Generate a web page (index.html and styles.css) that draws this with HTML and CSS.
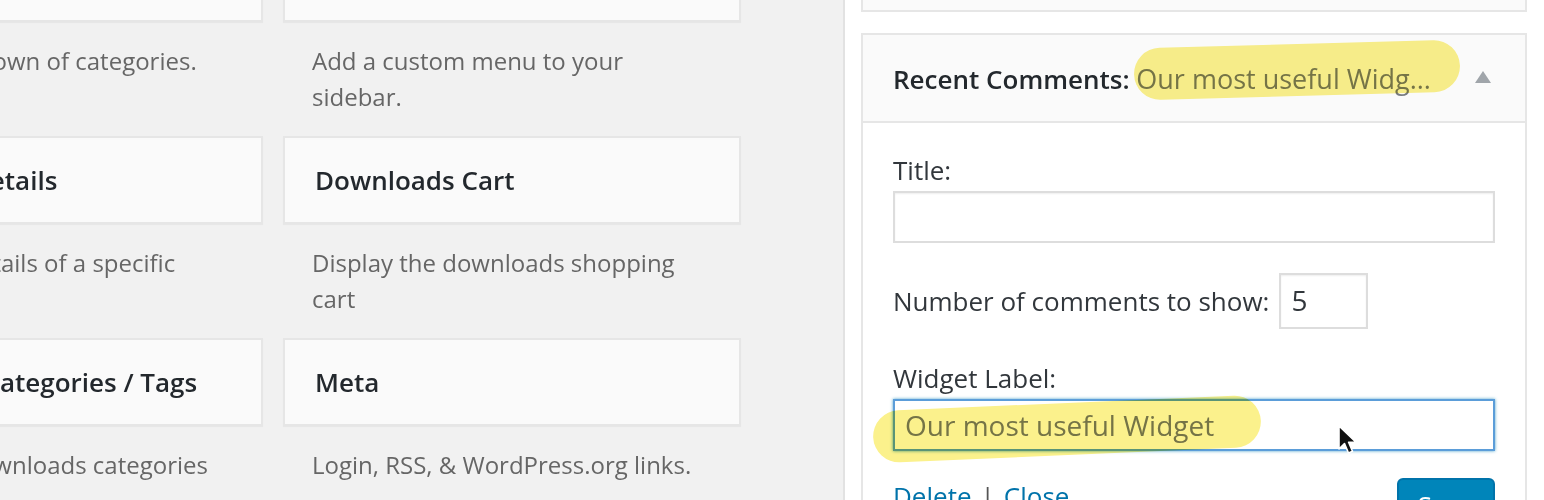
FILE: index.html
```html
<!DOCTYPE html>
<html>
<head>
<meta charset="utf-8">
<link rel="stylesheet" href="styles.css">
</head>
<body>
<div class="page">
  <div class="available">
    <div class="grid">
      <div class="item">
        <div class="card"><h3>Categories</h3></div>
        <p class="desc">A list or dropdown of categories.</p>
      </div>
      <div class="item">
        <div class="card"><h3>Custom Menu</h3></div>
        <p class="desc">Add a custom menu to your sidebar.</p>
      </div>
      <div class="item">
        <div class="card"><h3>Download Details</h3></div>
        <p class="desc">Display the details of a specific download</p>
      </div>
      <div class="item">
        <div class="card"><h3>Downloads Cart</h3></div>
        <p class="desc">Display the downloads shopping cart</p>
      </div>
      <div class="item">
        <div class="card"><h3>Downloads Categories / Tags</h3></div>
        <p class="desc">Display the downloads categories or tags</p>
      </div>
      <div class="item">
        <div class="card"><h3>Meta</h3></div>
        <p class="desc">Login, RSS, &amp; WordPress.org links.</p>
      </div>
    </div>
  </div>
  <div class="sidebar">
    <div class="widget-prev"></div>
    <div class="widget">
      <div class="widget-top">
        <h3 class="widget-title">Recent Comments: <span class="in-title">Our most useful Widg...</span></h3>
        <span class="toggle"></span>
        <span class="hl hl-title"></span>
      </div>
      <div class="widget-inside">
        <label class="lbl">Title:</label>
        <div class="input wide"></div>
        <div class="num-row">
          <label class="lbl">Number of comments to show:</label>
          <div class="input num">5</div>
        </div>
        <label class="lbl lbl-gap">Widget Label:</label>
        <div class="label-wrap">
          <div class="input wide focus">Our most useful Widget</div>
          <span class="hl hl-label"></span>
          <svg class="cursor" width="22" height="34" viewBox="0 0 22 34">
            <path d="M2 2 L2 25 L7.5 19.5 L11.5 29 L15.5 27.3 L11.6 18.2 L19 18.2 Z" fill="#111" stroke="#fff" stroke-width="1.6" stroke-linejoin="round"/>
          </svg>
        </div>
        <div class="controls">
          <div class="links"><a class="link">Delete</a><span class="sep">|</span><a class="link">Close</a></div>
          <div class="btn">Save</div>
        </div>
      </div>
    </div>
  </div>
</div>
</body>
</html>
```
FILE: styles.css
```css
html, body {
  margin: 0;
  padding: 0;
}
body {
  width: 1544px;
  height: 500px;
  overflow: hidden;
  background: #f1f1f1;
  font-family: "Open Sans", "Noto Sans", sans-serif;
  color: #555d66;
}
.page {
  display: flex;
  height: 500px;
}
.available {
  width: 843px;
  flex: none;
  overflow: hidden;
  border-right: 2px solid #e2e2e2;
}
.grid {
  display: grid;
  grid-template-columns: 458px 458px;
  column-gap: 20px;
  margin-left: -195px;
  margin-top: -66px;
}
.item {
  display: flex;
  flex-direction: column;
}
.card {
  height: 84px;
  background: #fafafa;
  border: 2px solid #e6e6e6;
  box-shadow: 0 1px 1px rgba(0,0,0,0.04);
  display: flex;
  align-items: center;
  padding-left: 30px;
}
.card h3 {
  margin: 0;
  font-size: 26px;
  font-weight: 600;
  color: #23282d;
  white-space: nowrap;
}
.desc {
  margin: 21px 0 21px;
  padding-left: 29px;
  padding-right: 34px;
  min-height: 72px;
  font-size: 24px;
  line-height: 36px;
  color: #666;
}
.sidebar {
  flex: 1;
  background: #fff;
  padding: 0 17px 0 16px;
  overflow: hidden;
}
.widget-prev {
  height: 76px;
  margin-top: -68px;
  background: #fafafa;
  border: 2px solid #e6e6e6;
}
.widget {
  margin-top: 21px;
  border: 2px solid #e6e6e6;
}
.widget-top {
  position: relative;
  height: 86px;
  background: #fafafa;
  border-bottom: 2px solid #e6e6e6;
  display: flex;
  align-items: center;
  padding: 0 34px 0 30px;
}
.widget-title {
  margin: 0;
  flex: 1;
  font-size: 26px;
  font-weight: 600;
  color: #23282d;
  white-space: nowrap;
}
.in-title {
  font-size: 27px;
  font-weight: 400;
  color: #777b80;
}
.toggle {
  width: 0;
  height: 0;
  border-left: 8px solid transparent;
  border-right: 8px solid transparent;
  border-bottom: 12px solid #a0a5aa;
  margin-bottom: 2px;
}
.hl {
  position: absolute;
  background: #fbf18c;
  mix-blend-mode: multiply;
  pointer-events: none;
}
.hl-title {
  left: 271px;
  top: 9px;
  width: 326px;
  height: 52px;
  border-radius: 28px;
  transform: rotate(-1.6deg);
}
.widget-inside {
  background: #fff;
  padding: 29px 30px 0 30px;
}
.lbl {
  display: block;
  font-size: 26px;
  line-height: 36px;
  color: #32373c;
}
.input {
  box-sizing: border-box;
  height: 52px;
  border: 2px solid #ddd;
  box-shadow: inset 0 1px 2px rgba(0,0,0,0.07);
  background: #fff;
  font-size: 28px;
  line-height: 48px;
  padding: 0 10px;
  color: #32373c;
}
.wide {
  margin-top: 3px;
}
.num-row {
  display: flex;
  align-items: center;
  margin-top: 30px;
}
.num {
  width: 89px;
  height: 56px;
  line-height: 50px;
  margin-left: 10px;
}
.lbl-gap {
  margin-top: 31px;
}
.label-wrap {
  position: relative;
}
.focus {
  border-color: #5b9dd9;
  box-shadow: 0 0 3px rgba(30,140,190,0.8);
  color: #777b80;
}
.hl-label {
  left: -20px;
  top: 4px;
  width: 388px;
  height: 52px;
  border-radius: 28px;
  transform: rotate(-2.5deg);
}
.cursor {
  position: absolute;
  left: 444px;
  top: 25px;
}
.controls {
  display: flex;
  justify-content: space-between;
  align-items: flex-start;
  margin-top: 27px;
}
.links {
  font-size: 26px;
  line-height: 36px;
  color: #555;
}
.link {
  color: #0073aa;
  text-decoration: underline;
}
.sep {
  margin: 0 9px;
}
.btn {
  width: 98px;
  height: 60px;
  box-sizing: border-box;
  background: #0085ba;
  border: 2px solid #0073aa;
  border-radius: 6px;
  color: #fff;
  font-size: 26px;
  text-align: center;
  line-height: 50px;
}
```
